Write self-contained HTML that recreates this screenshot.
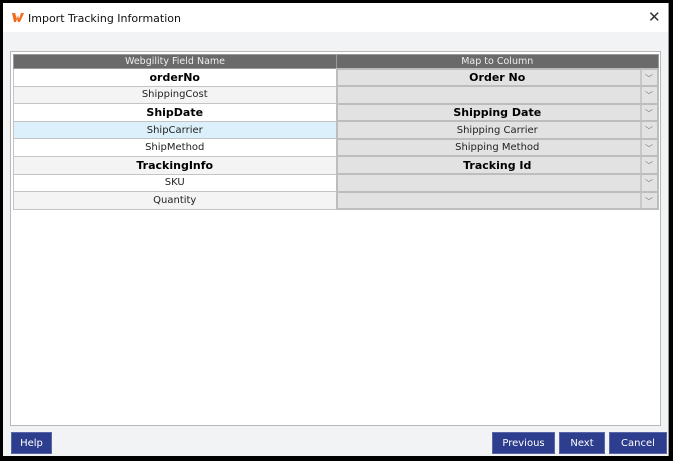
<!DOCTYPE html>
<html><head><style>
*{margin:0;padding:0;box-sizing:border-box}
body{width:673px;height:461px;background:#000;font-family:"DejaVu Sans","Liberation Sans",sans-serif;position:relative;overflow:hidden}
.win{position:absolute;left:3px;top:3px;width:666px;height:453px;background:#f2f3f5;border-right:1px solid #999}
.title{position:absolute;left:0;top:0;width:665px;height:29px;background:#fff;font-size:11px;color:#111}
.title span{position:absolute;left:25px;top:9px}
.close{position:absolute;left:645px;top:5px;font-size:15px;color:#333}
.panel{position:absolute;left:7px;top:48px;width:651px;height:375px;background:#fff;border:1px solid #b8b8b8}
table{position:absolute;left:2px;top:2px;width:646px;border-collapse:collapse;font-size:10px;color:#222}
td{height:17.6px;text-align:center;border:1px solid #c4c4c4;padding:0}
th{height:14px;background:#6a6a6a;color:#eee;font-weight:normal;font-size:9.5px;border:1px solid #9a9a9a}
td.f{width:323px}
td.m{background:#e2e2e2;border:2px solid #bdbdbd;position:relative}
td.m:after{content:"";position:absolute;right:0;top:0;bottom:0;width:15px;border-left:2px solid #c8c8c8}
td.m i{position:absolute;right:4px;top:3px;font-style:normal;font-size:8px;color:#777;z-index:1}
tr.alt td.f{background:#f4f4f4}
tr.sel td.f{background:#dcf0fb}
b{font-size:11px;color:#000}
.btn{position:absolute;top:429px;height:22px;background:#2e3e8e;color:#fff;font-size:10px;text-align:center;line-height:22px;border:1px solid #5a66a8}
</style></head><body>
<div class="win">
<div class="title">
<svg style="position:absolute;left:9px;top:10px" width="12" height="9" viewBox="0 0 12 9"><path d="M0 0h3l2 6 1-4 1 4 2-6h3l-4 9h-2l-1-3-1 3h-2z" fill="#f26b1d"/></svg>
<span>Import Tracking Information</span><div class="close">✕</div></div>
<div class="panel">
<table>
<tr><th>Webgility Field Name</th><th>Map to Column</th></tr>
<tr><td class="f"><b>orderNo</b></td><td class="m"><b>Order No</b><i>﹀</i></td></tr>
<tr class="alt"><td class="f">ShippingCost</td><td class="m"><i>﹀</i></td></tr>
<tr><td class="f"><b>ShipDate</b></td><td class="m"><b>Shipping Date</b><i>﹀</i></td></tr>
<tr class="sel"><td class="f">ShipCarrier</td><td class="m">Shipping Carrier<i>﹀</i></td></tr>
<tr><td class="f">ShipMethod</td><td class="m">Shipping Method<i>﹀</i></td></tr>
<tr class="alt"><td class="f"><b>TrackingInfo</b></td><td class="m"><b>Tracking Id</b><i>﹀</i></td></tr>
<tr><td class="f">SKU</td><td class="m"><i>﹀</i></td></tr>
<tr class="alt"><td class="f">Quantity</td><td class="m"><i>﹀</i></td></tr>
</table>
</div>
<div class="btn" style="left:8px;width:41px">Help</div>
<div class="btn" style="left:489px;width:63px">Previous</div>
<div class="btn" style="left:556px;width:46px">Next</div>
<div class="btn" style="left:606px;width:58px">Cancel</div>
</div>
</body></html>
